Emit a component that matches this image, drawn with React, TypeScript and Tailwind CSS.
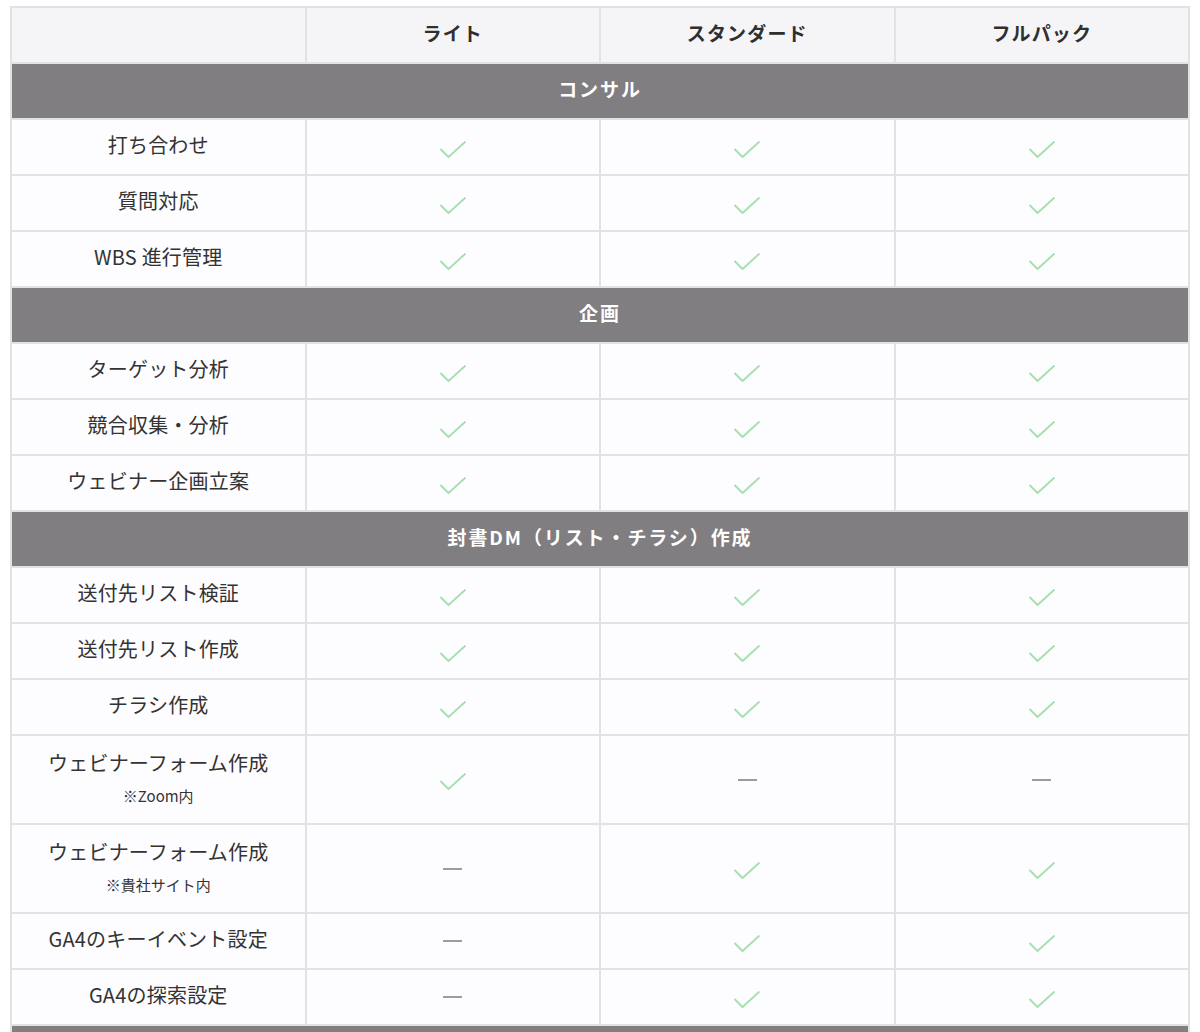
import { Fragment } from "react"

type Mark = "check" | "none"

type Item = {
  label: string
  note?: string
  marks: [Mark, Mark, Mark]
}

type Section = {
  title: string
  items: Item[]
}

const plans = ["ライト", "スタンダード", "フルパック"]

const sections: Section[] = [
  {
    title: "コンサル",
    items: [
      { label: "打ち合わせ", marks: ["check", "check", "check"] },
      { label: "質問対応", marks: ["check", "check", "check"] },
      { label: "WBS 進行管理", marks: ["check", "check", "check"] },
    ],
  },
  {
    title: "企画",
    items: [
      { label: "ターゲット分析", marks: ["check", "check", "check"] },
      { label: "競合収集・分析", marks: ["check", "check", "check"] },
      { label: "ウェビナー企画立案", marks: ["check", "check", "check"] },
    ],
  },
  {
    title: "封書DM（リスト・チラシ）作成",
    items: [
      { label: "送付先リスト検証", marks: ["check", "check", "check"] },
      { label: "送付先リスト作成", marks: ["check", "check", "check"] },
      { label: "チラシ作成", marks: ["check", "check", "check"] },
      { label: "ウェビナーフォーム作成", note: "※Zoom内", marks: ["check", "none", "none"] },
      { label: "ウェビナーフォーム作成", note: "※貴社サイト内", marks: ["none", "check", "check"] },
      { label: "GA4のキーイベント設定", marks: ["none", "check", "check"] },
      { label: "GA4の探索設定", marks: ["none", "check", "check"] },
    ],
  },
  // next section continues below the fold
  { title: "", items: [] },
]

function Check() {
  return (
    <svg width="28" height="20" viewBox="0 0 28 20" fill="none" className="mx-auto mt-[5px]">
      <path d="M2 9.5 L9.5 17 L26 2" stroke="#a3e0ad" strokeWidth="1.8" strokeLinecap="round" strokeLinejoin="round" />
    </svg>
  )
}

function Dash() {
  return <div className="mx-auto h-[2px] w-[19px] bg-[#9c9b9d]" />
}

export default function App() {
  return (
    <div
      className="min-h-[1032px] bg-white pl-[10px] pt-[6px] text-[#333]"
      style={{ fontFamily: '"Noto Sans CJK JP", "Noto Sans", sans-serif' }}
    >
      <table className="w-[1180px] table-fixed border-collapse border-2 border-[#e2e1e3]">
        <thead>
          <tr className="h-[56px] bg-[#f5f4f6]">
            <th className="border-2 border-[#e2e1e3]" />
            {plans.map((p) => (
              <th
                key={p}
                className="border-2 border-[#e2e1e3] pb-[4px] text-center text-[19px] font-bold tracking-[0.06em] text-[#2f2f2f]"
              >
                {p}
              </th>
            ))}
          </tr>
        </thead>
        <tbody>
          {sections.map((s, k) => (
            <Fragment key={k}>
              <tr className="h-[56px] bg-[#807e81]">
                <td
                  colSpan={4}
                  className="border-2 border-[#e2e1e3] pb-[3px] text-center text-[19px] font-bold tracking-[0.1em] text-white"
                >
                  {s.title}
                </td>
              </tr>
              {s.items.map((it, i) => (
                <tr key={i} className={`bg-[#fdfcfe] ${it.note ? "h-[89px]" : "h-[56px]"}`}>
                  <td className="border-2 border-[#e2e1e3] pb-[4px] text-center text-[20px] leading-[1.4] tracking-[0.01em] text-[#333]">
                    <div>{it.label}</div>
                    {it.note && <div className="mt-[8px] text-[15px] leading-[1.4] tracking-normal">{it.note}</div>}
                  </td>
                  {it.marks.map((m, j) => (
                    <td key={j} className="border-2 border-[#e2e1e3] text-center">
                      {m === "check" ? <Check /> : <Dash />}
                    </td>
                  ))}
                </tr>
              ))}
            </Fragment>
          ))}
        </tbody>
      </table>
    </div>
  )
}
